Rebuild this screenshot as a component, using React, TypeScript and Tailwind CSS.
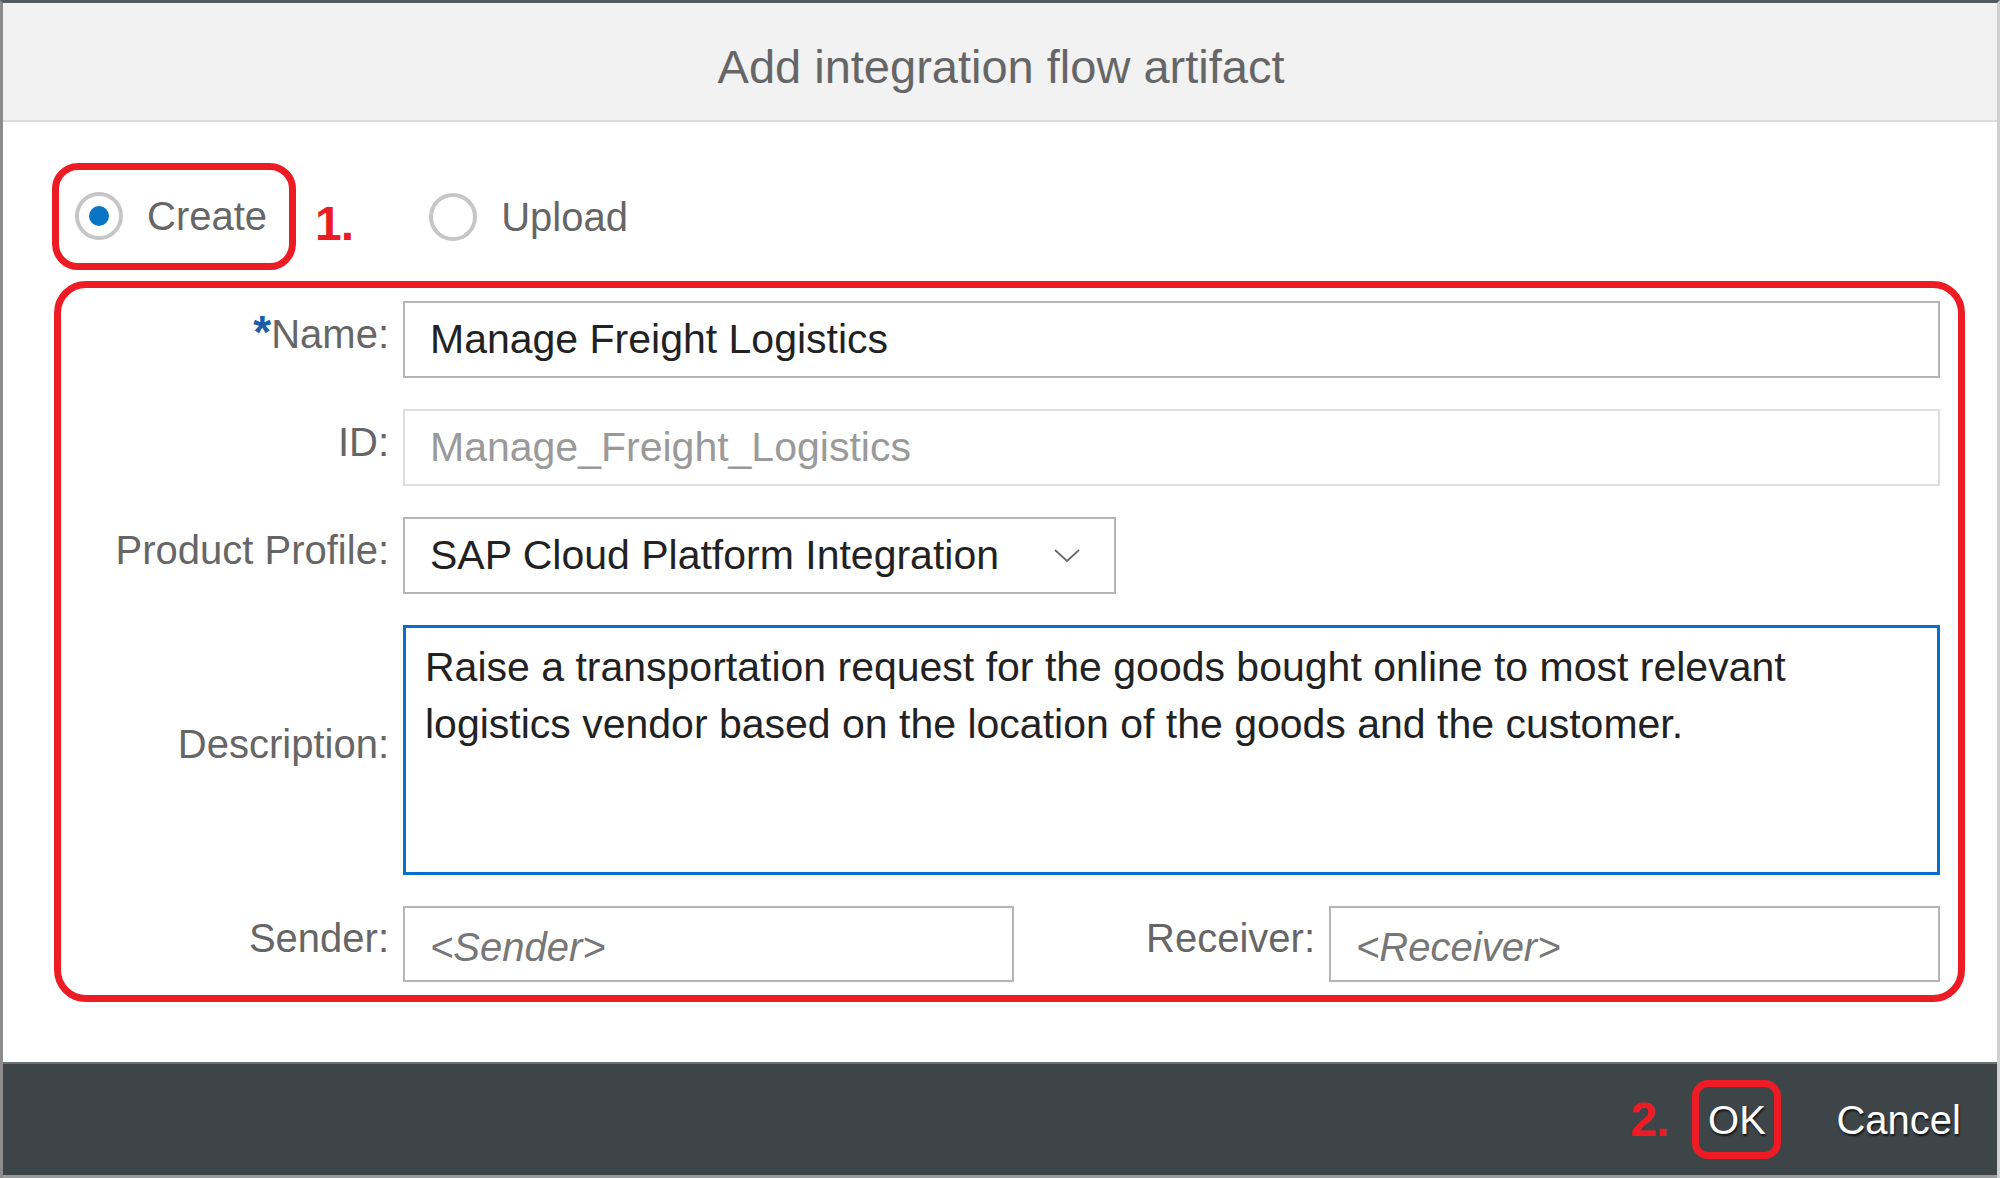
import React from 'react';

const RED = 'border-[#ed1c24]';

const Radio: React.FC<{ checked?: boolean; label: string }> = ({ checked, label }) => (
  <div className="flex items-center">
    <span className="w-[48px] h-[48px] rounded-full border-4 border-[#c6c6c6] flex items-center justify-center">
      {checked && <span className="w-[20px] h-[20px] rounded-full bg-[#0a74c4]" />}
    </span>
    <span className="ml-[24px] text-[40px] text-[#666666]">{label}</span>
  </div>
);

const Label: React.FC<{ children: React.ReactNode; className?: string }> = ({ children, className = '' }) => (
  <div className={`shrink-0 text-right text-[40px] text-[#666666] pr-[14px] pb-[12px] ${className}`}>
    {children}
  </div>
);

export default function App() {
  return (
    <div className="w-[2000px] h-[1178px] flex flex-col overflow-hidden font-[family-name:'Liberation_Sans',Arial,sans-serif] border-t-[3px] border-t-[#555a5e] border-l-[3px] border-l-[#8c8c8c] border-r-[3px] border-r-[#d0d0d0] bg-white">
      {/* header */}
      <div className="h-[119px] shrink-0 bg-[#f2f2f2] border-b-2 border-[#dcdcdc] flex items-center justify-center">
        <span className="text-[47px] text-[#666666] ml-[2px] mt-[12px]">Add integration flow artifact</span>
      </div>

      {/* body */}
      <div className="flex-1 flex flex-col pl-[49px] pr-[32px] pt-[41px]">
        <div className="flex items-center">
          <div className={`w-[244px] h-[107px] border-[7px] ${RED} rounded-[26px] flex items-center pl-[16px] pb-[2px]`}>
            <Radio checked label="Create" />
          </div>
          <span className="ml-[19px] mt-[14px] text-[48px] font-bold text-[#ed1c24] tracking-[-0.02em]">1.</span>
          <div className="ml-[76px]">
            <Radio label="Upload" />
          </div>
        </div>

        <div className={`mt-[11px] ml-[2px] h-[721px] border-[7px] ${RED} rounded-[32px] pt-[13px] pr-[18px] pb-[13px] flex flex-col gap-[31px]`}>
          <div className="flex items-center h-[77px]">
            <Label className="w-[342px]">
              <span className="text-[#1b5ea8] text-[46px] font-bold leading-none">*</span>Name:
            </Label>
            <div className="flex-1 h-full border-2 border-[#b5b5b5] flex items-center pl-[25px] text-[41px] text-[#222222]">
              Manage Freight Logistics
            </div>
          </div>

          <div className="flex items-center h-[77px]">
            <Label className="w-[342px]">ID:</Label>
            <div className="flex-1 h-full border-2 border-[#dddddd] flex items-center pl-[25px] text-[41px] text-[#9a9a9a]">
              Manage_Freight_Logistics
            </div>
          </div>

          <div className="flex items-center h-[77px]">
            <Label className="w-[342px]">Product Profile:</Label>
            <div className="w-[713px] h-full border-2 border-[#b5b5b5] flex items-center justify-between pl-[25px] pr-[34px] text-[41px] text-[#222222]">
              <span>SAP Cloud Platform Integration</span>
              <svg width="26" height="14" viewBox="0 0 26 14" fill="none">
                <path d="M1 1 L13 12 L25 1" stroke="#6a6a6a" strokeWidth="1.8" />
              </svg>
            </div>
          </div>

          <div className="flex items-center h-[250px]">
            <Label className="w-[342px]">Description:</Label>
            <div className="flex-1 h-full border-[3px] border-[#0a6ed1] pl-[19px] pt-[11px] pr-[20px] text-[41px] leading-[57px] text-[#222222]">
              Raise a transportation request for the goods bought online to most relevant
              <br />
              logistics vendor based on the location of the goods and the customer.
            </div>
          </div>

          <div className="flex items-center h-[76px]">
            <Label className="w-[342px]">Sender:</Label>
            <div className="w-[611px] h-full border-2 border-[#b5b5b5] flex items-center pl-[25px] pt-[6px] text-[40px] italic text-[#777777]">
              &lt;Sender&gt;
            </div>
            <Label className="w-[315px]">Receiver:</Label>
            <div className="flex-1 h-full border-2 border-[#b5b5b5] flex items-center pl-[25px] pt-[6px] text-[40px] italic text-[#777777]">
              &lt;Receiver&gt;
            </div>
          </div>
        </div>
      </div>

      {/* footer */}
      <div className="h-[116px] shrink-0 bg-[#3e4548] border-t-2 border-[#6b7174] border-b-[3px] border-b-[#9a9a9a] flex items-center justify-end pr-[36px] text-white text-[40px] [text-shadow:1px_2px_2px_rgba(0,0,0,0.7)]">
        <span className="text-[48px] font-bold text-[#ed1c24] tracking-[-0.02em] mr-[24px] [text-shadow:none]">2.</span>
        <div className={`w-[89px] h-[79px] border-[7px] ${RED} rounded-[16px] flex items-center justify-center`}>
          OK
        </div>
        <span className="ml-[55px]">Cancel</span>
      </div>
    </div>
  );
}
